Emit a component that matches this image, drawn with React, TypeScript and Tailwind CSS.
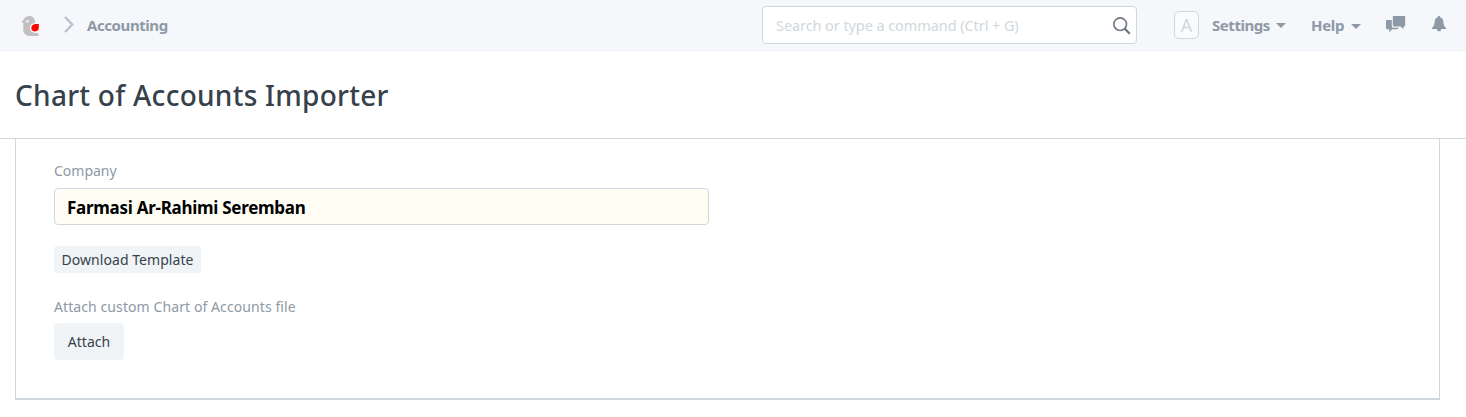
import React from 'react';

const BirdLogo: React.FC = () => (
    <svg width="19" height="22" viewBox="0 0 19 22" className="shrink-0">
        <path d="M0.3 5.8 C1.6 5 2.4 4.2 3 3 C4 1 6 0 8.3 0 C11.8 0 14 2.5 14 6 L14 10 L13 17 H15.8 C17.2 17 17.8 17.9 17.8 18.6 C17.8 19.5 17.1 20.1 16 20.1 H9.3 C4.8 20.1 2.3 17.6 2.3 13.6 V6.9 Z" fill="#c0c0c0" />
        <circle cx="6.5" cy="5.2" r="1.2" fill="#f5f7fa" />
        <path d="M18.6 6.8 V11.5 C18.6 14.6 16.7 16.5 13.8 16.5 C10.8 16.5 9 14.5 9 11.9 C9 9.3 10.8 7.3 13.8 7 Z" fill="#f5f7fa" />
        <path d="M17.8 8 V11.8 C17.8 14 16.2 15.4 14 15.4 C11.7 15.4 10.3 13.9 10.3 11.9 C10.3 9.7 12 8.2 14.3 8 Z" fill="#ff0000" />
    </svg>
);

const ChevronIcon: React.FC = () => (
    <svg width="10" height="17" viewBox="0 0 10 17" fill="none" stroke="#b8c2cc" strokeWidth="2.3" className="shrink-0">
        <path d="M1 1 L8.3 8.5 L1 16" />
    </svg>
);

const SearchIcon: React.FC = () => (
    <svg width="18" height="18" viewBox="0 0 18 18" fill="none" stroke="#6c7680" className="mt-0.5 shrink-0">
        <circle cx="7.2" cy="7.2" r="6.3" strokeWidth="1.6" />
        <path d="M11.6 11.6 L16.8 16.8" strokeWidth="2.2" />
    </svg>
);

const CaretIcon: React.FC<{ className?: string }> = ({ className }) => (
    <svg width="10" height="5" viewBox="0 0 10 5" fill="#8d99a6" className={className}>
        <path d="M0 0 H10 L5 5 Z" />
    </svg>
);

const ChatIcon: React.FC = () => (
    <svg width="20" height="17" viewBox="0 0 20 17" fill="#8d99a6" className="shrink-0">
        <path d="M1.2 4 H5.8 V10.5 C5.8 11.2 6.3 11.7 7 11.7 H12.5 V12 C12.5 12.7 12 13.2 11.3 13.2 H6.2 L3.2 16.2 V13.2 H1.2 C0.5 13.2 0 12.7 0 12 V5.2 C0 4.5 0.5 4 1.2 4 Z" />
        <path d="M8 0 H18 C18.7 0 19.2 0.5 19.2 1.2 V9.2 C19.2 9.9 18.7 10.4 18 10.4 H17.5 V13.3 L14.6 10.4 H8 C7.3 10.4 6.8 9.9 6.8 9.2 V1.2 C6.8 0.5 7.3 0 8 0 Z" />
    </svg>
);

const BellIcon: React.FC = () => (
    <svg width="14" height="16" viewBox="0 0 14 16" fill="#8d99a6" className="shrink-0">
        <path d="M5.8 1.2 C5.8 0.4 6.3 0 7 0 C7.7 0 8.2 0.4 8.2 1.2 C10.4 1.8 11.2 3.5 11.4 5.8 C11.6 9 12.2 10.3 14 12 V13 H0 V12 C1.8 10.3 2.4 9 2.6 5.8 C2.8 3.5 3.6 1.8 5.8 1.2 Z" />
        <path d="M4.8 13 H9.2 C9.2 14.4 8.2 15.3 7 15.3 C5.8 15.3 4.8 14.4 4.8 13 Z" />
    </svg>
);

const Navbar: React.FC = () => (
    <header className="flex h-[51px] border-b border-[#ebeef2] bg-[#f5f7fa] pl-[21px] font-bold text-[#8d99a6]">
        <div className="flex h-[50px] w-[741px] items-center">
            <div className="mt-[3px]">
                <BirdLogo />
            </div>
            <div className="ml-6 -mt-px flex">
                <ChevronIcon />
            </div>
            <a href="#" className="ml-[13px] text-[15px] tracking-[-0.42px]">Accounting</a>
        </div>
        <div className="mt-1.5 flex h-[38px] w-[375px] items-center rounded-[4px] border border-[#d1d8dd] bg-white pr-[5px] pl-[13px]">
            <input
                type="text"
                placeholder="Search or type a command (Ctrl + G)"
                className="min-w-0 flex-1 pt-0.5 text-[14.5px] font-normal tracking-[-0.08px] outline-none placeholder:text-[#d1d8dd]"
            />
            <SearchIcon />
        </div>
        <nav className="ml-[37px] flex h-[50px] items-center text-[15px]">
            <div className="flex h-7 w-[25px] items-center justify-center rounded-[5px] border border-[#d1d8dd] bg-[#fafbfc] pt-px text-[18px] font-normal text-[#d1d8dd]">A</div>
            <a href="#" className="ml-[13px] flex w-[74px] items-center justify-between tracking-[-0.45px]">
                Settings
                <CaretIcon />
            </a>
            <a href="#" className="ml-[25px] flex w-[50px] items-center justify-between tracking-[-0.3px]">
                Help
                <CaretIcon className="mt-[3px]" />
            </a>
            <a href="#" className="ml-[25px] -mt-px"><ChatIcon /></a>
            <a href="#" className="ml-[26px] -mt-[3px]"><BellIcon /></a>
        </nav>
    </header>
);

const App: React.FC = () => {
    return (
        <div className="h-[417px] overflow-hidden bg-white font-['Noto_Sans','Open_Sans',sans-serif] text-[#36414c]">
            <Navbar />
            <div className="flex h-[88px] items-center border-b border-[#d1d8dd] px-[15px]">
                <h1 className="whitespace-nowrap text-[28px] font-medium tracking-[0.27px]">Chart of Accounts Importer</h1>
            </div>
            <main className="ml-[15px] h-[261px] w-[1425px] border-x border-b-2 border-[#d1d8dd] pt-[21px] pl-[38px] text-[14px]">
                <label className="block h-[28px] leading-[22px] text-[#8d99a6]">Company</label>
                <input
                    type="text"
                    defaultValue="Farmasi Ar-Rahimi Seremban"
                    className="block h-[37px] w-[655px] rounded-[4px] border border-[#d1d8dd] bg-[#fffdf4] px-3 pt-0.5 text-[17px] font-bold tracking-[-0.28px] text-black outline-none"
                />
                <button className="mt-[21px] block h-[27px] w-[147px] rounded-[3px] bg-[#f0f4f7] text-[14px] tracking-[0.05px] whitespace-nowrap">
                    Download Template
                </button>
                <label className="mt-[23px] block h-[27px] leading-[22px] tracking-[0.09px] text-[#8d99a6]">
                    Attach custom Chart of Accounts file
                </label>
                <button className="block h-[37px] w-[70px] rounded-[4px] bg-[#f0f4f7] text-[14px]">
                    Attach
                </button>
            </main>
        </div>
    );
};

export default App;
